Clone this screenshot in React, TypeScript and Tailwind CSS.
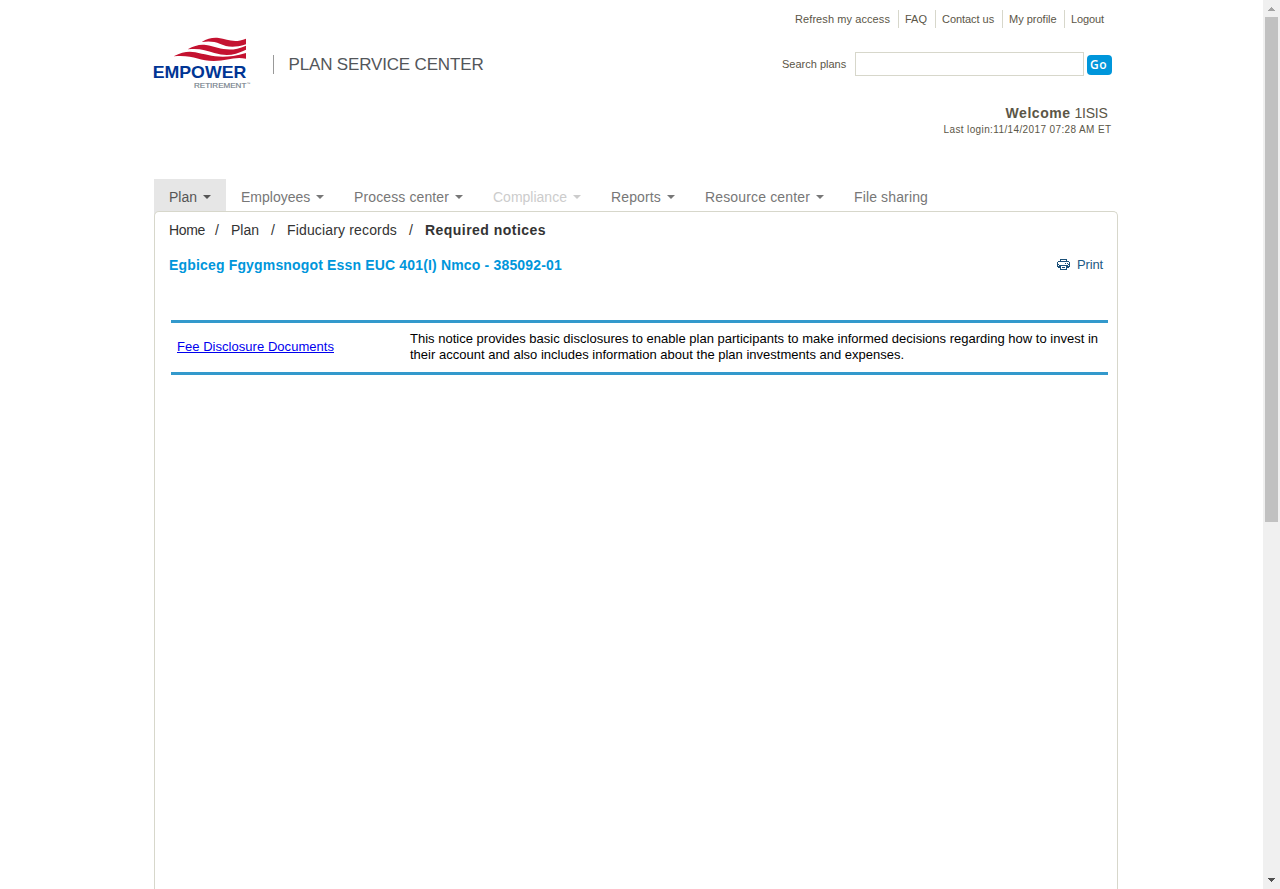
const topLinks = [
  { label: "Refresh my access", cls: "w-[103px] tracking-[0.086px]" },
  { label: "FAQ", cls: "w-[37px] border-l pl-1.5" },
  { label: "Contact us", cls: "w-[67px] border-l pl-1.5 tracking-[-0.05px]" },
  { label: "My profile", cls: "w-[62px] border-l pl-1.5" },
  { label: "Logout", cls: "w-[48px] border-l pl-1.5 tracking-[-0.1px]" },
];

const navItems = [
  { label: "Plan", menu: true, cls: "w-[72px] bg-[#e6e6e6] text-[#555555]" },
  { label: "Employees", menu: true, cls: "w-[113px] text-[#777777]" },
  { label: "Process center", menu: true, cls: "w-[139px] text-[#777777] tracking-[0.116px]" },
  { label: "Compliance", menu: true, cls: "w-[118px] text-[#cccccc]" },
  { label: "Reports", menu: true, cls: "w-[94px] text-[#777777] tracking-[0.138px]" },
  { label: "Resource center", menu: true, cls: "w-[149px] text-[#777777] tracking-[0.152px]" },
  { label: "File sharing", menu: false, cls: "w-[104px] text-[#777777] tracking-[0.135px]" },
];

function Logo() {
  return (
    <svg className="mt-[35px] ml-[-1px] shrink-0" width="100" height="56" viewBox="39 30 300 168" aria-label="Empower Retirement">
      <g fill="#c41230">
        <path d="M185 51C203 41 217 37 236 39C262 42 281 56 318 41V58C276 71 260 64 241 57C222 49 207 48 185 51Z" />
        <path d="M143 73C164 61 181 57 198 60C236 66 265 86 318 62V74C282 92 258 94 223 84C197 75 176 69 143 73Z" />
        <path d="M101 94C127 81 145 78 166 82C207 90 244 106 318 84V101C281 94 262 108 221 108C177 108 158 88 101 94Z" />
      </g>
      <text x="38" y="158" fontSize="51" fontWeight="700" fill="#003594" textLength="281" lengthAdjust="spacingAndGlyphs" fontFamily="Liberation Sans, sans-serif">EMPOWER</text>
      <text x="162" y="189" fontSize="22" fill="#74808a" stroke="#74808a" strokeWidth="0.5" textLength="157" lengthAdjust="spacingAndGlyphs" fontFamily="Liberation Sans, sans-serif">RETIREMENT</text>
      <text x="321" y="179" fontSize="11" fill="#74808a" fontFamily="Liberation Sans, sans-serif">™</text>
    </svg>
  );
}

function PrinterIcon() {
  return (
    <svg className="mb-[2px]" width="13" height="11" viewBox="0 0 13 11" fill="#1c5078" shapeRendering="crispEdges">
      <path d="M3 0h7v1H3zM3 1h1v1H3zM9 1h1v1H9zM1 2h11v1H1zM0 3h1v5H0zM12 3h1v5h-1zM8 4h1v1H8zM10 4h1v1h-1zM1 5h1v1H1zM11 5h1v1h-1zM2 6h9v1H2zM1 7h3v1H1zM9 7h3v1H9zM1 8h3v1H1zM9 8h3v1H9zM5 8h3v1H5zM3 9h1v1H3zM9 9h1v1H9zM3 10h7v1H3z" />
    </svg>
  );
}

function Caret() {
  return (
    <svg className="mb-px ml-[6px]" width="8" height="4" viewBox="0 0 8 4" fill="currentColor">
      <path d="M0 0h8L4 4z" />
    </svg>
  );
}

function Header() {
  return (
    <header className="flex h-[179px] justify-between">
      <div className="flex">
        <Logo />
        <div className="mt-[55px] ml-5 h-[19px] w-px bg-[#999999]" />
        <div className="mt-[55px] ml-[14.5px] text-[17px] leading-5 tracking-[-0.162px] whitespace-nowrap text-[#53565a]">PLAN SERVICE CENTER</div>
      </div>
      <div className="flex w-[336px] flex-col text-[11px] whitespace-nowrap text-[#5b5647]">
        <nav className="mt-2.5 ml-[13px] flex h-[18px] leading-[18px]">
          {topLinks.map((l) => (
            <a key={l.label} href="#" className={`shrink-0 border-[#d7d7cb] ${l.cls}`}>{l.label}</a>
          ))}
        </nav>
        <form className="mt-6 flex h-6 items-center">
          <label htmlFor="plans" className="w-[73px]">Search plans</label>
          <input id="plans" className="h-6 w-[229px] border border-[#d7d7cb] bg-white outline-none" />
          <button type="button" className="mt-[2px] ml-[3px] h-5 w-[25px] rounded-[4px] bg-[#0096db] pr-[2px] font-['Open_Sans',sans-serif] text-[12px] leading-5 font-semibold tracking-[0.6px] text-white">Go</button>
        </form>
        <div className="mt-[28px] mr-[10.5px] text-right text-sm leading-[18px]">
          <b className="tracking-[0.54px]">Welcome</b> <span className="tracking-[-0.25px]">1ISIS</span>
        </div>
        <div className="mr-[6.5px] text-right text-[10px] leading-4 tracking-[0.379px]">Last login:11/14/2017 07:28 AM ET</div>
      </div>
    </header>
  );
}

function Scrollbar() {
  return (
    <div className="flex h-full w-[17px] shrink-0 flex-col items-center bg-[#f0f0f0]">
      <svg width="17" height="17" viewBox="0 0 17 17" fill="#a3a3a3" shapeRendering="crispEdges">
        <path d="M8 7h1v1H8zM7 8h3v1H7zM6 9h5v1H6zM5 10h7v1H5z" />
      </svg>
      <div className="h-[505px] w-[13px] bg-[#c1c1c1]" />
      <svg className="mt-auto" width="17" height="17" viewBox="0 0 17 17" fill="#505050" shapeRendering="crispEdges">
        <path d="M5 6h7v1H5zM6 7h5v1H6zM7 8h3v1H7zM8 9h1v1H8z" />
      </svg>
    </div>
  );
}

export default function App() {
  return (
    <div className="flex h-[889px] overflow-hidden bg-white font-['Liberation_Sans',Arial,sans-serif]">
      <div className="flex flex-1 pl-[154px]">
        <div className="flex w-[964px] flex-col">
          <Header />
          <nav className="flex h-8 text-sm whitespace-nowrap">
            {navItems.map((n) => (
              <a key={n.label} href="#" className={`flex h-9 shrink-0 items-center pl-[15px] ${n.cls}`}>
                {n.label}
                {n.menu && <Caret />}
              </a>
            ))}
          </nav>
          <main className="relative flex-1 rounded-t-[5px] border border-b-0 border-[#d7d7cb] bg-white">
            <div className="flex h-9 items-center pl-3.5 text-sm whitespace-nowrap text-[#333333]">
              <a href="#" className="w-[46px] tracking-[-0.34px]">Home</a>
              <span className="w-4">/</span>
              <a href="#" className="w-10">Plan</a>
              <span className="w-4">/</span>
              <a href="#" className="w-[122px] tracking-[0.154px]">Fiduciary records</a>
              <span className="w-4">/</span>
              <b className="tracking-[0.463px]">Required notices</b>
            </div>
            <div className="mt-[7px] flex h-5 items-center justify-between pr-3.5 pl-3.5 whitespace-nowrap">
              <h1 className="text-[14px] font-bold tracking-[0.165px] text-[#0096db]">Egbiceg Fgygmsnogot Essn EUC 401(I) Nmco - 385092-01</h1>
              <a href="#" className="flex items-center gap-[7px] text-[13px] tracking-[-0.147px] text-[#1d5a85]">
                <PrinterIcon />
                Print
              </a>
            </div>
            <section className="mt-[45px] mr-[9px] ml-4 flex h-[55px] border-y-[3px] border-[#3399cc] text-[13px] whitespace-nowrap text-black">
              <a href="#" className="mt-4 ml-1.5 h-4 w-[233px] leading-4 tracking-[0.039px] text-[#0000ee] underline">Fee Disclosure Documents</a>
              <p className="mt-2 leading-4 tracking-[0.007px]">
                This notice provides basic disclosures to enable plan participants to make informed decisions regarding how to invest in
                <br />
                their account and also includes information about the plan investments and expenses.
              </p>
            </section>
          </main>
        </div>
      </div>
      <Scrollbar />
    </div>
  );
}
